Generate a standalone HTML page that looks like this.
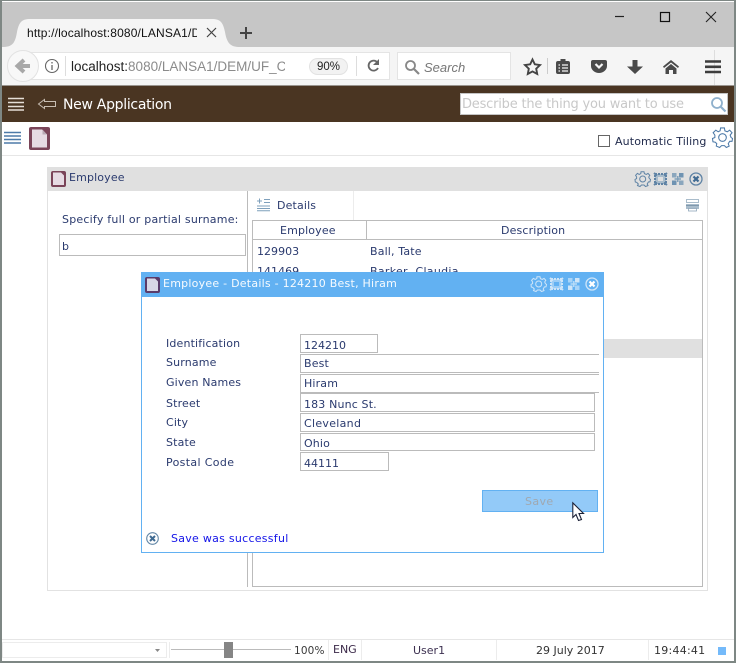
<!DOCTYPE html>
<html><head><meta charset="utf-8">
<style>
html,body{margin:0;padding:0;width:736px;height:663px;overflow:hidden;background:#fff}
#r{position:relative;width:736px;height:663px;overflow:hidden;font-family:"DejaVu Sans",sans-serif;font-size:11px;color:#2a3a6e}
.a{position:absolute;box-sizing:border-box}
.t{position:absolute;white-space:nowrap;line-height:14px;letter-spacing:.15px}
.f{position:absolute;box-sizing:border-box;border:1px solid #bbb;background:#fff;height:19px}
svg{position:absolute;overflow:visible}
</style></head><body><div id="r">
<!-- browser chrome -->
<div class="a" style="left:2px;top:2px;width:732px;height:45px;background:#c6c6c6"></div>
<div class="a" style="left:2px;top:47px;width:732px;height:38px;background:#f5f5f5"></div>
<svg style="left:0;top:0" width="736" height="50"><path d="M2 47C12 47 15 44 17 32C19 22 22 19 30 19H212C220 19 223 22 225 32C227 44 231 47 240 47Z" fill="#f5f5f5"/>
<path d="M207 28L216 37M216 28L207 37" stroke="#444" stroke-width="1.2"/>
<path d="M246 27V39M240 33H252" stroke="#444" stroke-width="2"/>
<path d="M615 16.500H624" stroke="#222" stroke-width="1.200"/>
<rect x="660.500" y="12.500" width="9" height="9" fill="none" stroke="#111" stroke-width="1.200"/>
<path d="M706 12L716 22M716 12L706 22" stroke="#222" stroke-width="1.100"/></svg>
<div class="t" style="left:27px;top:26px;width:170px;overflow:hidden;font:12px/14px 'Liberation Sans',sans-serif;color:#111;letter-spacing:.15px">http://localhost:8080/LANSA1/DEM</div>
<!-- url bar -->
<div class="a" style="left:22px;top:52px;width:368px;height:28px;background:#fff;border:1px solid #e4e4e4;border-left:0"></div>
<div class="a" style="left:7px;top:50px;width:32px;height:32px;border-radius:50%;background:#f8f8f8;border:1px solid #e2e2e2"></div>
<svg style="left:0;top:50px" width="70" height="32"><path d="M30 16H19M24 10L17.500 16L24 22" fill="none" stroke="#a8a8a8" stroke-width="4"/>
<circle cx="52" cy="16" r="6.500" fill="none" stroke="#666" stroke-width="1.100"/><path d="M52 15V20M52 12V13.500" stroke="#666" stroke-width="1.300"/><path d="M65.500 6V26" stroke="#ddd"/></svg>
<div class="t" style="left:71px;top:59px;width:214px;overflow:hidden;font:13.500px/16px 'Liberation Sans',sans-serif;color:#8b8b8b;letter-spacing:0"><span style="color:#222">localhost:</span>8080/LANSA1/DEM/UF_C</div>
<div class="a" style="left:309px;top:58px;width:39px;height:17px;border-radius:9px;background:#f2f2f2;border:1px solid #e2e2e2;font:11.500px/16px 'Liberation Sans',sans-serif;color:#222;text-align:center">90%</div>
<svg style="left:355px;top:50px" width="30" height="32"><path d="M1.500 6V26" stroke="#ddd"/><path d="M22.500 12.500A5 5 0 1 0 23 18" fill="none" stroke="#666" stroke-width="1.800"/><path d="M24 9V15H18Z" fill="#666"/></svg>
<div class="a" style="left:397px;top:52px;width:114px;height:28px;background:#fff;border:1px solid #e4e4e4"></div>
<svg style="left:404px;top:59px" width="18" height="18"><circle cx="6.500" cy="6.500" r="4.500" fill="none" stroke="#888" stroke-width="1.800"/><path d="M10 10L15 15" stroke="#888" stroke-width="2.200"/></svg>
<div class="t" style="left:424px;top:60px;font:italic 13px/15px 'Liberation Sans',sans-serif;color:#777;letter-spacing:0">Search</div>
<svg style="left:520px;top:50px" width="216" height="35">
<path d="M12.500 9.500L14.800 14.300L20 15L16.200 18.700L17.200 24L12.500 21.400L7.800 24L8.800 18.700L5 15L10.200 14.300Z" fill="none" stroke="#444" stroke-width="1.900"/>
<path d="M27.500 8V24" stroke="#ccc"/>
<path d="M38 11H40.500V9H45.500V11H48Q50 11 50 13V22Q50 24 48 24H38Q36 24 36 22V13Q36 11 38 11Z" fill="#4a4a4a"/><path d="M38.500 15H40M42 15H48M38.500 18H40M42 18H48M38.500 21H40M42 21H48" stroke="#f5f5f5" stroke-width="1.300"/>
<path d="M73 10H85Q87 10 87 12V16C87 20 83 23 79 23C75 23 71 20 71 16V12Q71 10 73 10Z" fill="#4a4a4a"/><path d="M75.500 14L79 17.500L82.500 14" fill="none" stroke="#f5f5f5" stroke-width="2.200"/>
<path d="M112.500 10H117.500V16.500H123L115 24L107 16.500H112.500Z" fill="#4a4a4a"/>
<path d="M151 10L143 16.500L144 18L151 12.500L158 18L159 16.500ZM145.500 18.500L151 14L156.500 18.500V24H153V20H149V24H145.500Z" fill="#4a4a4a"/>
<path d="M194.500 0V35" stroke="#ddd"/>
<path d="M185 11.500H201M185 16.800H201M185 22H201" stroke="#3d3d3d" stroke-width="2.600"/>
</svg>
<!-- app bar -->
<div class="a" style="left:2px;top:85px;width:732px;height:37px;background:#4a3522;border-top:1px solid #9a958f"></div>
<svg style="left:8px;top:96px" width="50" height="16"><path d="M0 2.500H16M0 6.500H16M0 10.500H16M0 14H16" stroke="#e6dfd7" stroke-width="1.500"/><path d="M36.500 5.500V3.500L30.500 8L36.500 12.500V10.500H47.500V5.500Z" fill="none" stroke="#c7bdb2" stroke-width="1"/></svg>
<div class="t" style="left:63px;top:96px;font-size:14px;line-height:18px;color:#fff;letter-spacing:-.3px">New Application</div>
<div class="a" style="left:460px;top:93px;width:268px;height:22px;background:#fff;border:1px solid #c4c4c4"></div>
<div class="t" style="left:462px;top:97px;font-size:13px;line-height:16px;color:#c8c8c8;letter-spacing:-.2px">Describe the thing you want to use</div>
<svg style="left:710px;top:96px" width="18" height="17"><circle cx="7" cy="7" r="5" fill="none" stroke="#8fb0cc" stroke-width="1.800"/><path d="M11 11L15.500 15.500" stroke="#8fb0cc" stroke-width="2.200"/></svg>
<!-- app toolbar -->
<svg style="left:4px;top:131px" width="17" height="14"><path d="M0 1.500H17M0 5H17M0 8.500H17M0 12H17" stroke="#4d7aa8" stroke-width="1.500"/></svg>
<svg style="left:29px;top:127px" width="21" height="23"><rect x="0" y="0" width="21" height="23" rx="2" fill="#7a4458"/><path d="M3 2.500H13L18 7.500V20.500H3Z" fill="#e6dbe3"/><path d="M13.500 2.500V7.500H18" fill="#b9a9b4"/></svg>
<div class="a" style="left:598px;top:135px;width:12px;height:12px;border:1px solid #666;background:#fff"></div>
<div class="t" style="left:615px;top:135px;color:#222c4d;letter-spacing:.13px">Automatic Tiling</div>
<svg style="left:712px;top:127px" width="21" height="21" viewBox="0 0 22 22"><path d="M9 1H13L13.500 4L16 5L18.500 3.300L21 6L19 8.500L20 11L21.500 12L21 15L18.500 15L17 17.500L18 20L15 21.500L13 19.500H10L8 21.500L4.500 20L5 17.500L3.500 16L1 15.500L.5 12L3 11L3 8.500L1.200 6L4 3.300L6.500 5L8.500 4Z" fill="none" stroke="#4d7aa8" stroke-width="1.100"/><circle cx="11" cy="11" r="4" fill="none" stroke="#4d7aa8" stroke-width="1.100"/></svg>
<div class="a" style="left:2px;top:155px;width:732px;height:1px;background:#e6e6e6"></div>
<!-- employee panel -->
<div class="a" style="left:47px;top:167px;width:661px;height:424px;border:1px solid #e2e2e2;background:#fff"></div>
<div class="a" style="left:47px;top:167px;width:661px;height:24px;background:#e0e0e0"></div>
<svg style="left:51px;top:171px" width="15" height="16"><rect width="15" height="16" rx="2" fill="#7a4458"/><path d="M2 1.500H10L13 4.500V14H2Z" fill="#e6dbe3"/></svg>
<div class="t" style="left:69px;top:171px">Employee</div>
<svg style="left:635px;top:171px" width="70" height="16" fill="none" stroke="#5f83a5">
<path d="M6 .8H9L9.400 2.600L11.300 3.400L13 2.400L14.800 4.300L13.700 6L14.400 7.600L15.500 8.500L15 10.800L13.400 11L12.200 13L13 14.600L10.500 15.500L9 14H6.500L5 15.500L2.500 14.600L3.300 13L1.800 11.400L.3 11L0 8.500L1.600 7.600L1.600 6L.6 4.300L2.400 2.400L4.200 3.400L5.800 2.600Z"/><circle cx="7.700" cy="8" r="3"/>
<rect x="20" y="3" width="11" height="10" fill="#a9bccb" stroke="#5f83a5" stroke-width="2" stroke-dasharray="2 1"/><rect x="23" y="6" width="5" height="4" fill="#e0e0e0" stroke="none"/><path d="M19 2L22 4.500M32 2L29 4.500M19 14L22 11.500M32 14L29 11.500" stroke-width="2"/>
<rect x="37" y="2" width="4.500" height="4.500" fill="#8aa6bd" stroke="none"/><rect x="44" y="2" width="4.500" height="4.500" fill="#6f93b2" stroke="none"/><rect x="37" y="9.500" width="4.500" height="4.500" fill="#6f93b2" stroke="none"/><rect x="44" y="9.500" width="4.500" height="4.500" fill="#8aa6bd" stroke="none"/><path d="M42.800 5V11M39.500 8H46" stroke="#7f9fb9" stroke-width="1.500"/>
<circle cx="61" cy="8" r="6" stroke-width="1.300"/><path d="M58.500 5.500L63.500 10.500M63.500 5.500L58.500 10.500" stroke-width="2.200" stroke="#3f6a92"/></svg>
<div class="a" style="left:247px;top:191px;width:1px;height:396px;background:#bbb"></div>
<div class="a" style="left:353px;top:191px;width:1px;height:29px;background:#ececec"></div>
<div class="t" style="left:62px;top:213px;letter-spacing:.22px">Specify full or partial surname:</div>
<div class="f" style="left:59px;top:234px;width:187px;height:22px"></div>
<div class="t" style="left:62px;top:240px">b</div>
<svg style="left:257px;top:198px" width="13" height="13"><path d="M0 3H5M2.500 .5V5.500M7 1.500H13M7 4.500H13M0 8H13M0 10.500H13M0 12.800H13" stroke="#7fa0bc" stroke-width="1"/></svg>
<div class="t" style="left:277px;top:199px">Details</div>
<svg style="left:686px;top:199px" width="13" height="13"><rect x=".5" y=".5" width="12" height="3" fill="none" stroke="#a9bccb"/><path d="M0 5H13V10H0Z" fill="#a9bccb"/><path d="M0 6.500H13" stroke="#7f98ad"/><rect x="2.500" y="9.500" width="8" height="2.500" fill="#fff" stroke="#8fa6b9" stroke-width=".8"/></svg>
<!-- grid -->
<div class="a" style="left:252px;top:220px;width:451px;height:367px;border:1px solid #bbb;background:#fff"></div>
<div class="a" style="left:253px;top:239px;width:449px;height:1px;background:#bbb"></div>
<div class="a" style="left:366px;top:221px;width:1px;height:18px;background:#bbb"></div>
<div class="t" style="left:280px;top:224px">Employee</div>
<div class="t" style="left:501px;top:224px">Description</div>
<div class="t" style="left:257px;top:245px;letter-spacing:.03px">129903</div>
<div class="t" style="left:370px;top:245px">Ball, Tate</div>
<div class="t" style="left:257px;top:265px;letter-spacing:.03px">141469</div>
<div class="t" style="left:370px;top:265px;letter-spacing:.3px">Barker, Claudia</div>
<div class="a" style="left:253px;top:339px;width:449px;height:19px;background:#e0e0e0"></div>
<!-- dialog -->
<div class="a" style="left:141px;top:272px;width:463px;height:281px;background:#fff;border:1px solid #62b1f2"></div>
<div class="a" style="left:141px;top:272px;width:463px;height:25px;background:#62b1f2"></div>
<svg style="left:145px;top:277px" width="15" height="16"><rect width="15" height="16" rx="2" fill="#5a3b6a"/><path d="M2 1.500H10L13 4.500V14H2Z" fill="#d8d7e6"/></svg>
<div class="t" style="left:163px;top:277px;color:#fff;opacity:.95;letter-spacing:.24px">Employee - Details - 124210 Best, Hiram</div>
<svg style="left:531px;top:276px" width="70" height="16" fill="none" stroke="#cfe5f8">
<path d="M6 .8H9L9.400 2.600L11.300 3.400L13 2.400L14.800 4.300L13.700 6L14.400 7.600L15.500 8.500L15 10.800L13.400 11L12.200 13L13 14.600L10.500 15.500L9 14H6.500L5 15.500L2.500 14.600L3.300 13L1.800 11.400L.3 11L0 8.500L1.600 7.600L1.600 6L.6 4.300L2.400 2.400L4.200 3.400L5.800 2.600Z"/><circle cx="7.700" cy="8" r="3"/>
<rect x="20" y="3" width="11" height="10" fill="#9ccdf6" stroke-width="2" stroke-dasharray="2 1"/><rect x="23" y="6" width="5" height="4" fill="#62b1f2" stroke="none"/><path d="M19 2L22 4.500M32 2L29 4.500M19 14L22 11.500M32 14L29 11.500" stroke-width="2"/>
<rect x="37" y="2" width="4.500" height="4.500" fill="#a8d4f8" stroke="none"/><rect x="44" y="2" width="4.500" height="4.500" fill="#cfe5f8" stroke="none"/><rect x="37" y="9.500" width="4.500" height="4.500" fill="#cfe5f8" stroke="none"/><rect x="44" y="9.500" width="4.500" height="4.500" fill="#a8d4f8" stroke="none"/><path d="M42.800 5V11M39.500 8H46" stroke="#b8dcf8" stroke-width="1.500"/>
<circle cx="61" cy="8" r="6" stroke-width="1.300"/><path d="M58.500 5.500L63.500 10.500M63.500 5.500L58.500 10.500" stroke-width="2.200" stroke="#fff"/></svg>
<div class="t" style="left:166px;top:337px">Identification</div>
<div class="t" style="left:166px;top:356px">Surname</div>
<div class="t" style="left:166px;top:376px">Given Names</div>
<div class="t" style="left:166px;top:397px">Street</div>
<div class="t" style="left:166px;top:416px">City</div>
<div class="t" style="left:166px;top:436px">State</div>
<div class="t" style="left:166px;top:456px;letter-spacing:.35px">Postal Code</div>
<div class="f" style="left:300px;top:334px;width:78px"></div>
<div class="f" style="left:300px;top:354px;width:299px;border-right:0"></div>
<div class="f" style="left:300px;top:374px;width:299px;border-right:0"></div>
<div class="f" style="left:300px;top:393px;width:295px"></div>
<div class="f" style="left:300px;top:413px;width:295px"></div>
<div class="f" style="left:300px;top:433px;width:295px;height:18px"></div>
<div class="f" style="left:300px;top:452px;width:89px;height:19px"></div>
<div class="t" style="left:304px;top:339px;letter-spacing:0">124210</div>
<div class="t" style="left:304px;top:357px">Best</div>
<div class="t" style="left:304px;top:377px">Hiram</div>
<div class="t" style="left:304px;top:398px">183 Nunc St.</div>
<div class="t" style="left:304px;top:417px;letter-spacing:.3px">Cleveland</div>
<div class="t" style="left:304px;top:437px">Ohio</div>
<div class="t" style="left:304px;top:457px;letter-spacing:0">44111</div>
<div class="a" style="left:482px;top:490px;width:116px;height:22px;background:#93caf8;border:1px solid #62b1f2"></div>
<div class="t" style="left:525px;top:495px;color:#a0a8b0;letter-spacing:.4px">Save</div>
<svg style="left:572px;top:502px" width="14" height="20"><path d="M.8 .8V15.500L4 12.500L6.500 18.500L9.500 17.500L7 11.500H11.500Z" fill="#fff" stroke="#1d2238" stroke-width="1.100"/></svg>
<svg style="left:146px;top:532px" width="13" height="13" fill="none"><circle cx="6.500" cy="6.500" r="5.800" stroke="#6488a8" stroke-width="1.100"/><path d="M4 4L9 9M9 4L4 9" stroke="#3f6a92" stroke-width="2"/></svg>
<div class="t" style="left:171px;top:532px;color:#1414e8;letter-spacing:.27px">Save was successful</div>
<!-- status bar -->
<div class="a" style="left:2px;top:639px;width:732px;height:1px;background:#e6e6e6"></div>
<div class="a" style="left:2px;top:642px;width:165px;height:16px;border:1px solid #ececec;background:#fff"></div>
<svg style="left:155px;top:649px" width="6" height="4"><path d="M0 0H5L2.500 3Z" fill="#888"/></svg>
<div class="a" style="left:169px;top:642px;width:1px;height:16px;background:#ececec"></div>
<div class="a" style="left:171px;top:649px;width:120px;height:1px;background:#bbb"></div>
<div class="a" style="left:224px;top:642px;width:9px;height:16px;background:#858585"></div>
<div class="t" style="left:294px;top:644px;font-size:10.500px;color:#3a3a3a">100%</div>
<div class="a" style="left:328px;top:640px;width:1px;height:20px;background:#ececec"></div>
<div class="t" style="left:333px;top:643px;color:#3c2a4a;letter-spacing:0">ENG</div>
<div class="a" style="left:361px;top:640px;width:1px;height:20px;background:#ececec"></div>
<div class="t" style="left:413px;top:644px;color:#3c3050;letter-spacing:0">User1</div>
<div class="a" style="left:496px;top:640px;width:1px;height:20px;background:#ececec"></div>
<div class="t" style="left:536px;top:644px;color:#333;letter-spacing:0">29 July 2017</div>
<div class="a" style="left:648px;top:640px;width:1px;height:20px;background:#ececec"></div>
<div class="t" style="left:654px;top:644px;color:#333;letter-spacing:.25px">19:44:41</div>
<div class="a" style="left:718px;top:647px;width:8px;height:8px;background:#74bafa"></div>
<!-- window frame -->
<div class="a" style="left:0;top:0;width:736px;height:663px;border:2px solid #7e8784;border-width:1px 2px 2px 1px;outline:0;box-shadow:inset 1px 0 #7e8784"></div>
</div></body></html>
